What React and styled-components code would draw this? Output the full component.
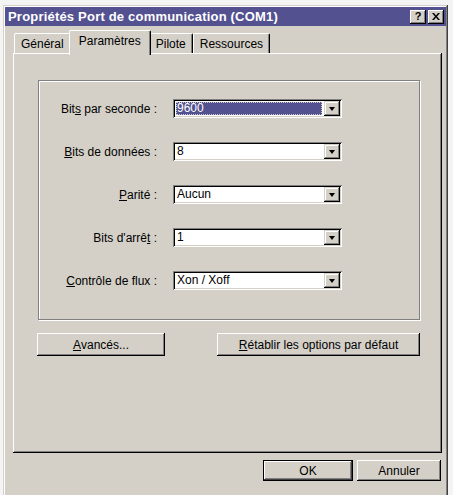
import React from "react";
import styled, { createGlobalStyle } from "styled-components";

const face = "#d4d0c8";
const shadow = "#808080";
const dark = "#404040";
const navy = "#53518f";

const GlobalStyle = createGlobalStyle`
  html, body {
    margin: 0;
    padding: 0;
    background: #f4f4f4;
    overflow: hidden;
  }
  body {
    font-family: "Liberation Sans", Arial, sans-serif;
    font-size: 12px;
    color: #000;
  }
`;

const rows = [
  { label: <>Bit<u>s</u> par seconde :</>, value: "9600", selected: true },
  { label: <><u>B</u>its de données :</>, value: "8" },
  { label: <><u>P</u>arité :</>, value: "Aucun" },
  { label: <>Bits d'arrê<u>t</u> :</>, value: "1" },
  { label: <><u>C</u>ontrôle de flux :</>, value: "Xon / Xoff" },
];

const tabs = [
  { name: "Général" },
  { name: "Paramètres", active: true },
  { name: "Pilote" },
  { name: "Ressources" },
];

const App = () => {
  return (
    <>
      <GlobalStyle />
      <Window>
        <TitleBar>
          <Title>Propriétés Port de communication (COM1)</Title>
          <TitleButtons>
            <CaptionButton>?</CaptionButton>
            <CaptionButton>
              <svg width="8" height="7" viewBox="0 0 8 7">
                <path d="M0 0h2l2 2.5L6 0h2L5 3.5 8 7H6L4 4.5 2 7H0l3-3.5z" fill="#000" />
              </svg>
            </CaptionButton>
          </TitleButtons>
        </TitleBar>
        <Body>
          <TabStrip>
            {tabs.map((tab) => (
              <Tab key={tab.name} $active={tab.active}>
                {tab.name}
              </Tab>
            ))}
          </TabStrip>
          <Panel>
            <GroupBox>
              <FieldGrid>
                {rows.map((row, i) => (
                  <React.Fragment key={i}>
                    <Label>{row.label}</Label>
                    <Combo>
                      <ComboText $selected={row.selected}>
                        <span>{row.value}</span>
                      </ComboText>
                      <DropButton>
                        <Arrow />
                      </DropButton>
                    </Combo>
                  </React.Fragment>
                ))}
              </FieldGrid>
            </GroupBox>
            <PanelButtons>
              <Button $width={128}>
                <u>A</u>vancés...
              </Button>
              <Button $width={203}>
                <u>R</u>établir les options par défaut
              </Button>
            </PanelButtons>
          </Panel>
          <Footer>
            <Button $width={90} $default>
              OK
            </Button>
            <Button $width={84}>Annuler</Button>
          </Footer>
        </Body>
      </Window>
    </>
  );
};

const Window = styled.div`
  margin: 5px 0 0 3px;
  width: 445px;
  height: 490px;
  box-sizing: border-box;
  padding: 2px 2px 0;
  background: ${face};
  box-shadow: inset -1px 0 ${dark}, inset 1px 1px ${face},
    inset -2px 0 ${shadow}, inset 2px 2px #fff;
  display: flex;
  flex-direction: column;
  overflow: hidden;
`;

const TitleBar = styled.div`
  height: 19px;
  flex: none;
  background: ${navy};
  display: flex;
  align-items: center;
  justify-content: space-between;
  padding: 0 2px 0 3px;
`;

const Title = styled.div`
  color: #fff;
  font-weight: bold;
  font-size: 13px;
  letter-spacing: 0.2px;
`;

const TitleButtons = styled.div`
  display: flex;
  gap: 2px;
`;

const CaptionButton = styled.div`
  width: 16px;
  height: 14px;
  box-sizing: border-box;
  background: ${face};
  box-shadow: inset -1px -1px #000, inset 1px 1px #fff,
    inset -2px -2px ${shadow}, inset 2px 2px ${face};
  display: flex;
  align-items: center;
  justify-content: center;
  font-weight: bold;
  font-size: 11px;
  line-height: 1;
`;

const Body = styled.div`
  padding: 6px 4px 0 8px;
  display: flex;
  flex-direction: column;
`;

const TabStrip = styled.div`
  display: flex;
  align-items: flex-end;
  height: 23px;
  padding-left: 1px;
  position: relative;
  z-index: 1;
  margin-bottom: -2px;
`;

const Tab = styled.div`
  height: ${(p) => (p.$active ? "25px" : "20px")};
  margin: ${(p) => (p.$active ? "0 -2px" : "0 0 2px 0")};
  padding: ${(p) => (p.$active ? "3px 9px 0" : "3px 6px 0")};
  box-sizing: border-box;
  background: ${face};
  border-top: 1px solid #fff;
  border-left: 1px solid #fff;
  border-right: 1px solid #000;
  border-radius: 2px 2px 0 0;
  box-shadow: inset -1px 0 ${shadow}, inset 1px 1px ${face};
  position: relative;
  z-index: ${(p) => (p.$active ? 2 : 0)};
`;

const Panel = styled.div`
  height: 400px;
  box-sizing: border-box;
  padding: 2px;
  background: ${face};
  box-shadow: inset -1px -1px #000, inset 1px 1px #fff,
    inset -2px -2px ${shadow}, inset 2px 2px ${face};
  display: flex;
  flex-direction: column;
`;

const GroupBox = styled.div`
  margin: 25px 0 0 23px;
  width: 382px;
  height: 240px;
  box-sizing: border-box;
  border: 1px solid ${shadow};
  box-shadow: inset 1px 1px #fff, 1px 1px #fff;
  padding-top: 18px;
`;

const FieldGrid = styled.div`
  display: grid;
  grid-template-columns: 118px 169px;
  grid-auto-rows: 19px;
  column-gap: 16px;
  row-gap: 24px;
`;

const Label = styled.div`
  text-align: right;
  align-self: center;
  white-space: nowrap;
`;

const Combo = styled.div`
  height: 19px;
  box-sizing: border-box;
  padding: 2px;
  background: #fff;
  box-shadow: inset 1px 1px ${shadow}, inset -1px -1px #fff,
    inset 2px 2px #000, inset -2px -2px ${face};
  display: flex;
`;

const ComboText = styled.div`
  flex: 1;
  display: flex;
  align-items: center;
  padding: 0 1px;
  span {
    flex: 1;
    height: 13px;
    line-height: 13px;
    padding-left: 1px;
    background: ${(p) => (p.$selected ? navy : "transparent")};
    color: ${(p) => (p.$selected ? "#fff" : "#000")};
    outline: ${(p) => (p.$selected ? "1px dotted #c8c8c8" : "none")};
    outline-offset: -1px;
    margin-right: 1px;
  }
`;

const DropButton = styled.div`
  width: 16px;
  height: 15px;
  box-sizing: border-box;
  background: ${face};
  box-shadow: inset -1px -1px #000, inset 1px 1px ${face},
    inset -2px -2px ${shadow}, inset 2px 2px #fff;
  display: flex;
  align-items: center;
  justify-content: center;
`;

const Arrow = styled.div`
  width: 0;
  height: 0;
  border-left: 3.5px solid transparent;
  border-right: 3.5px solid transparent;
  border-top: 4px solid #000;
  margin-top: 1px;
`;

const PanelButtons = styled.div`
  display: flex;
  justify-content: space-between;
  width: 383px;
  margin: 13px 0 0 22px;
`;

const Button = styled.div`
  width: ${(p) => p.$width}px;
  height: 23px;
  box-sizing: border-box;
  background: ${face};
  display: flex;
  align-items: center;
  justify-content: center;
  box-shadow: ${(p) =>
    p.$default
      ? `inset 0 0 0 1px #000, inset -2px -2px ${dark}, inset 2px 2px #fff, inset -3px -3px ${shadow}`
      : `inset -1px -1px #000, inset 1px 1px #fff, inset -2px -2px ${shadow}, inset 2px 2px ${face}`};
`;

const Footer = styled.div`
  display: flex;
  justify-content: flex-end;
  gap: 4px;
  margin-top: 7px;
  padding-right: 1px;
  & > div {
    height: 21px;
  }
`;

export default App;
